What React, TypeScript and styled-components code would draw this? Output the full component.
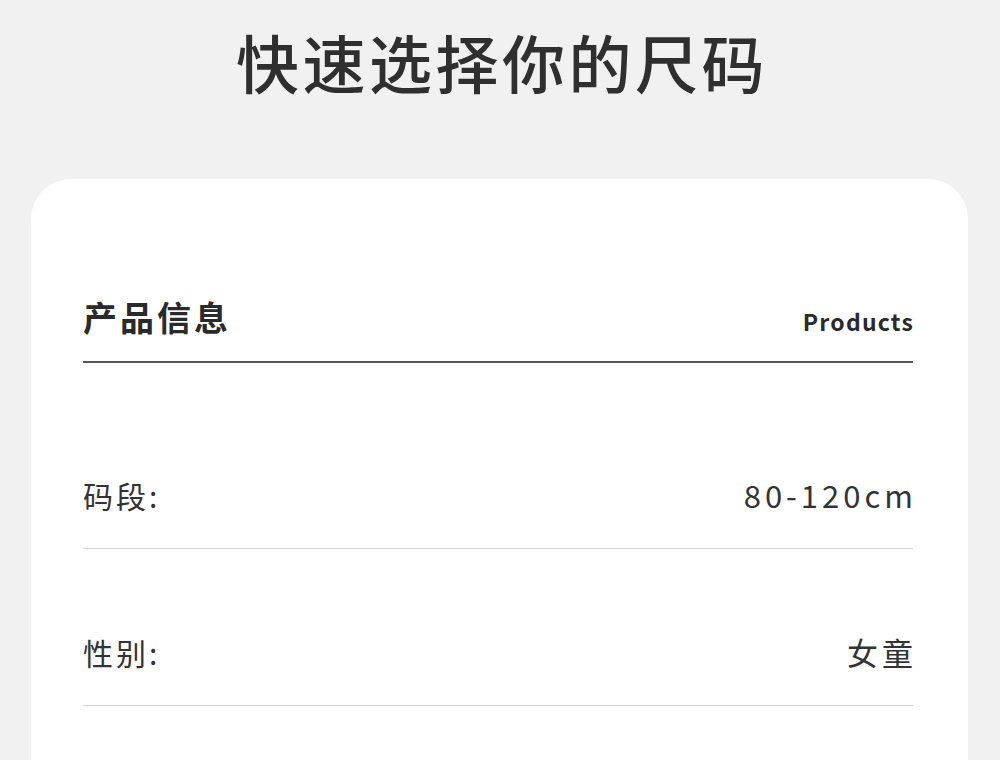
import styled, { createGlobalStyle } from 'styled-components'

const GlobalStyle = createGlobalStyle`
  html, body {
    margin: 0;
    padding: 0;
    background: #f1f1f1;
  }
  body {
    font-family: "Noto Sans CJK SC", "Noto Sans", sans-serif;
    color: #333;
  }
`

const Page = styled.div`
  width: 1000px;
  height: 760px;
  overflow: hidden;
  background: #f1f1f1;
`

const Title = styled.h1`
  margin: 0;
  height: 120px;
  display: flex;
  align-items: center;
  justify-content: center;
  font-size: 63px;
  font-weight: 500;
  letter-spacing: 3.5px;
  color: #2f2f2f;
  padding-left: 4px;
`

const Card = styled.section`
  margin: 59px 0 0 31px;
  width: 937px;
  min-height: 640px;
  box-sizing: border-box;
  padding: 0 55px 0 52px;
  background: #fff;
  border-radius: 40px;
`

const Header = styled.div`
  display: flex;
  justify-content: space-between;
  align-items: baseline;
  padding: 118px 0 23px;
  border-bottom: 2px solid #555;
`

const Heading = styled.h2`
  margin: 0;
  font-size: 34px;
  line-height: 40px;
  font-weight: 700;
  letter-spacing: 3px;
  color: #2a2a2a;
`

const Sub = styled.span`
  font-size: 23px;
  font-weight: 700;
  letter-spacing: 1.2px;
  color: #2a2a2a;
  margin-right: -1px;
`

const Row = styled.div<{ $first?: boolean }>`
  display: flex;
  justify-content: space-between;
  align-items: center;
  margin-top: ${p => (p.$first ? '29px' : '0')};
  padding: 87px 0 37px;
  line-height: 32px;
  border-bottom: 1px solid #d4d4d4;
`

const Label = styled.span`
  font-size: 30px;
  letter-spacing: 3px;
  color: #333;
`

const Value = styled.span`
  font-size: 31px;
  letter-spacing: 4px;
  color: #333;
  margin-right: -4px;
`

const rows = [
  { label: '码段:', value: '80-120cm' },
  { label: '性别:', value: '女童' },
]

export default function App() {
  return (
    <Page>
      <GlobalStyle />
      <Title>快速选择你的尺码</Title>
      <Card>
        <Header>
          <Heading>产品信息</Heading>
          <Sub>Products</Sub>
        </Header>
        {rows.map((r, i) => (
          <Row key={r.label} $first={i === 0}>
            <Label>{r.label}</Label>
            <Value>{r.value}</Value>
          </Row>
        ))}
      </Card>
    </Page>
  )
}
